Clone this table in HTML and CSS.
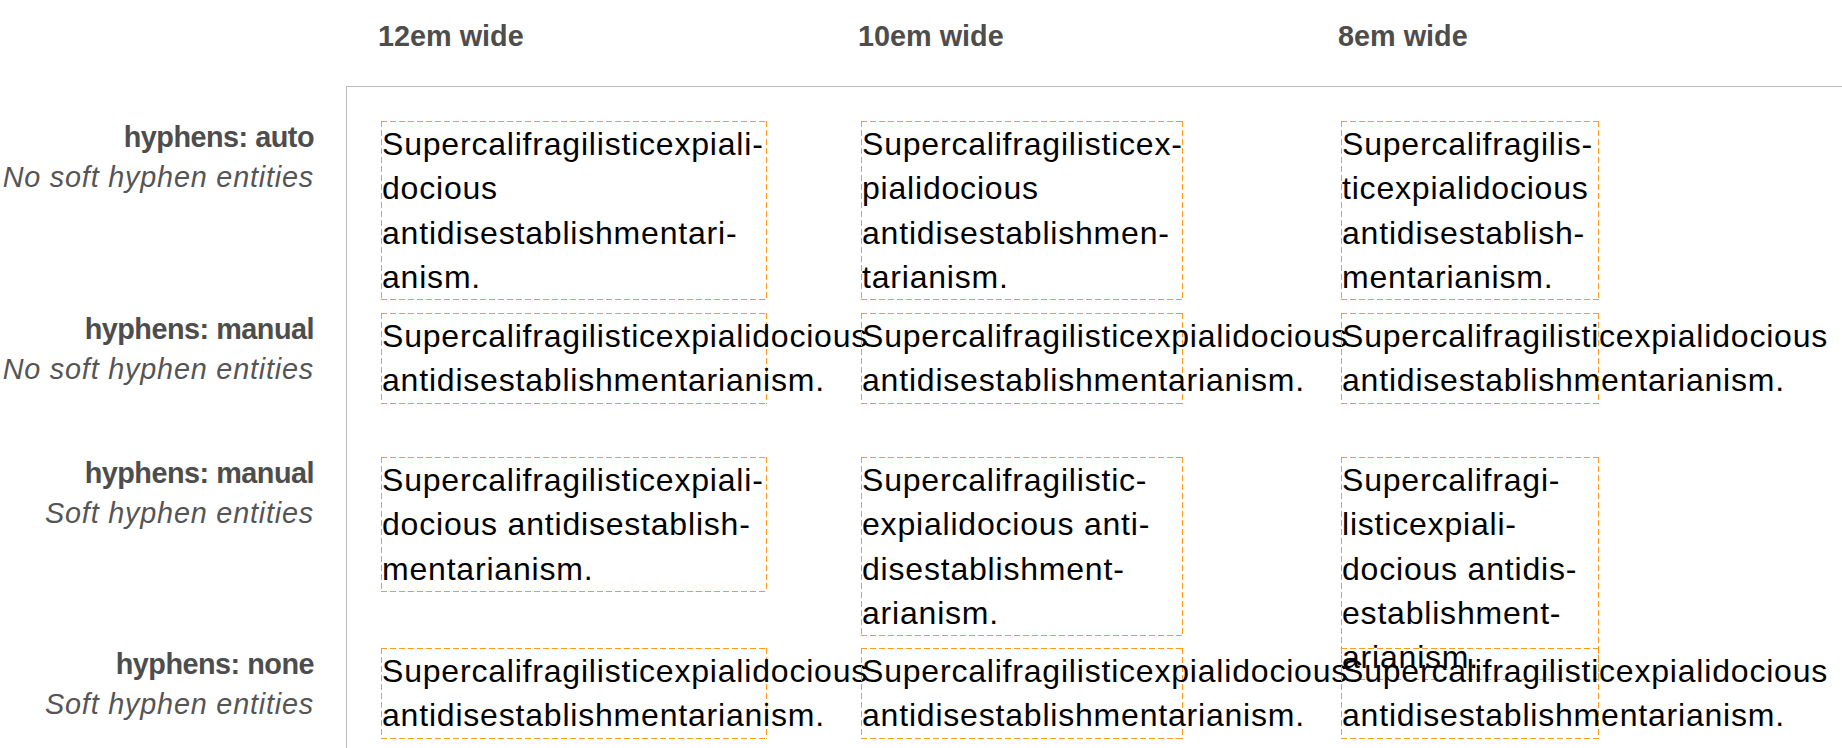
FILE: index.html
```html
<!DOCTYPE html>
<html lang="en">
<head>
<meta charset="utf-8">
<title>hyphens</title>
<link rel="stylesheet" href="styles.css">
</head>
<body>
<div class="grid">
  <div class="rule"></div>

  <div class="col-head c1">12em wide</div>
  <div class="col-head c2">10em wide</div>
  <div class="col-head c3">8em wide</div>

  <div class="label r1"><b>hyphens: auto</b><i>No soft hyphen entities</i></div>
  <div class="box w12 r1 c1">Supercalifragilisticexpiali-<br>docious<br>antidisestablishmentari-<br>anism.</div>
  <div class="box w10 r1 c2">Supercalifragilisticex-<br>pialidocious<br>antidisestablishmen-<br>tarianism.</div>
  <div class="box w8 r1 c3">Supercalifragilis-<br>ticexpialidocious<br>antidisestablish-<br>mentarianism.</div>

  <div class="label r2"><b>hyphens: manual</b><i>No soft hyphen entities</i></div>
  <div class="box w12 r2 c1">Supercalifragilisticexpialidocious<br>antidisestablishmentarianism.</div>
  <div class="box w10 r2 c2">Supercalifragilisticexpialidocious<br>antidisestablishmentarianism.</div>
  <div class="box w8 r2 c3">Supercalifragilisticexpialidocious<br>antidisestablishmentarianism.</div>

  <div class="label r3"><b>hyphens: manual</b><i>Soft hyphen entities</i></div>
  <div class="box w12 r3 c1">Supercalifragilisticexpiali-<br>docious antidisestablish-<br>mentarianism.</div>
  <div class="box w10 r3 c2">Supercalifragilistic-<br>expialidocious anti-<br>disestablishment-<br>arianism.</div>
  <div class="box w8 r3 c3">Supercalifragi-<br>listicexpiali-<br>docious antidis-<br>establishment-<br>arianism.</div>

  <div class="label r4"><b>hyphens: none</b><i>Soft hyphen entities</i></div>
  <div class="box w12 r4 c1">Supercalifragilisticexpialidocious<br>antidisestablishmentarianism.</div>
  <div class="box w10 r4 c2">Supercalifragilisticexpialidocious<br>antidisestablishmentarianism.</div>
  <div class="box w8 r4 c3">Supercalifragilisticexpialidocious<br>antidisestablishmentarianism.</div>
</div>
</body>
</html>
```

FILE: styles.css
```css
html, body {
  margin: 0;
  padding: 0;
  background: #fff;
}

body {
  font-family: "Liberation Sans", Arial, sans-serif;
  color: #000;
  overflow: hidden;
}

.grid {
  display: grid;
  grid-template-columns: 346px 35px 480px 480px 1fr;
  grid-template-rows: 86px 35px 192px 144px 191px 1fr;
  min-height: 100vh;
}

.rule {
  grid-column: 2 / -1;
  grid-row: 2 / -1;
  border-top: 1px solid #bbbbbb;
  border-left: 1px solid #bbbbbb;
}

.col-head {
  grid-row: 1;
  font-size: 28.8px;
  line-height: 40px;
  font-weight: bold;
  color: #4d4d4d;
  padding-top: 16px;
  margin-left: -3px;
}

.c1 { grid-column: 3; }
.c2 { grid-column: 4; }
.c3 { grid-column: 5; }

.r1 { grid-row: 3; }
.r2 { grid-row: 4; }
.r3 { grid-row: 5; }
.r4 { grid-row: 6; }

.label {
  grid-column: 1;
  align-self: start;
  margin-top: -4px;
  padding-right: 32px;
  text-align: right;
  font-size: 28.8px;
  line-height: 40px;
}

.label b {
  display: block;
  font-weight: bold;
  color: #4d4d4d;
  letter-spacing: -0.5px;
}

.label i {
  display: block;
  font-style: italic;
  color: #555555;
  letter-spacing: 0.8px;
}

.box {
  align-self: start;
  border: 1px solid transparent;
  background-origin: border-box;
  background-clip: border-box;
  background-image:
    repeating-linear-gradient(90deg, #ff9a1a 0 6px, transparent 6px 9px),
    repeating-linear-gradient(90deg, #ff9a1a 0 6px, transparent 6px 9px),
    repeating-linear-gradient(180deg, #ff9a1a 0 6px, transparent 6px 9px),
    repeating-linear-gradient(180deg, #ff9a1a 0 6px, transparent 6px 9px);
  background-size: 100% 1px, 100% 1px, 1px 100%, 1px 100%;
  background-position: left top, left bottom, left top, right top;
  background-repeat: no-repeat;
  font-size: 32px;
  line-height: 44.26px;
  letter-spacing: 0.8px;
  white-space: nowrap;
}

.w12 { width: 12em; }
.w10 { width: 10em; }
.w8 { width: 8em; }
```
